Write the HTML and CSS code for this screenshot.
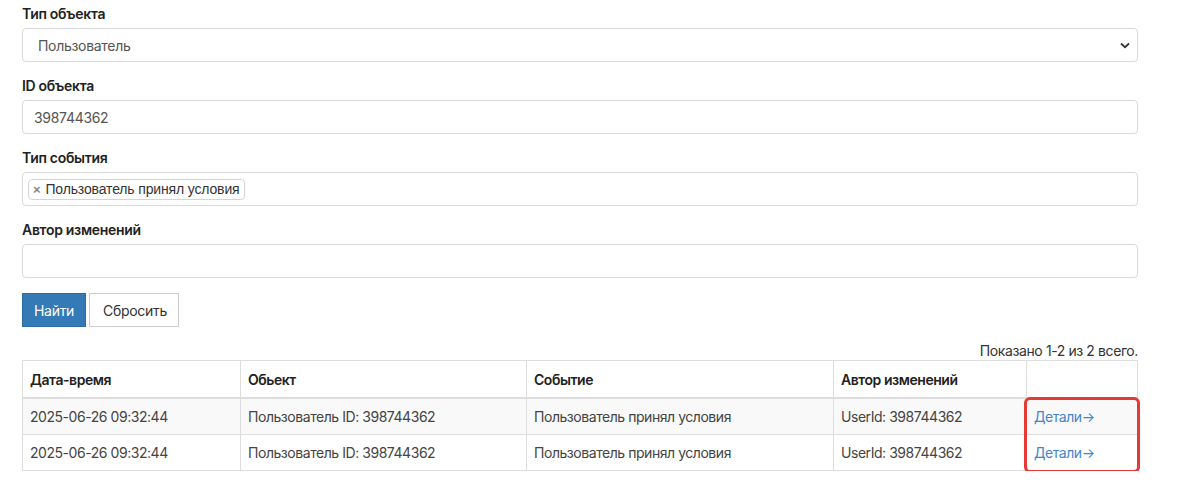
FILE: index.html
```html
<!DOCTYPE html>
<html lang="ru">
<head>
<meta charset="utf-8">
<link rel="stylesheet" href="styles.css">
</head>
<body>
<div class="page">
  <form class="filters">
    <div class="field">
      <label class="label">Тип объекта</label>
      <div class="control select">
        <span class="select-value">Пользователь</span>
        <svg class="chev" width="10" height="7" viewBox="0 0 10 7"><path d="M1 1.5 L5 5.2 L9 1.5" fill="none" stroke="#333" stroke-width="1.8"/></svg>
      </div>
    </div>
    <div class="field">
      <label class="label">ID объекта</label>
      <div class="control input">398744362</div>
    </div>
    <div class="field">
      <label class="label">Тип события</label>
      <div class="control multi">
        <span class="tag"><span class="tag-x">×</span>Пользователь принял условия</span>
      </div>
    </div>
    <div class="field">
      <label class="label">Автор изменений</label>
      <div class="control input"></div>
    </div>
    <div class="buttons">
      <button type="button" class="btn btn-primary">Найти</button>
      <button type="button" class="btn btn-default">Сбросить</button>
    </div>
  </form>

  <div class="summary">Показано 1-2 из 2 всего.</div>
  <div class="table-wrap">
    <table class="grid">
      <colgroup>
        <col class="c1"><col class="c2"><col class="c3"><col class="c4"><col class="c5">
      </colgroup>
      <thead>
        <tr><th>Дата-время</th><th>Обьект</th><th>Событие</th><th>Автор изменений</th><th></th></tr>
      </thead>
      <tbody>
        <tr class="odd"><td>2025-06-26 09:32:44</td><td>Пользователь ID: 398744362</td><td>Пользователь принял условия</td><td>UserId: 398744362</td><td><a class="link">Детали→</a></td></tr>
        <tr><td>2025-06-26 09:32:44</td><td>Пользователь ID: 398744362</td><td>Пользователь принял условия</td><td>UserId: 398744362</td><td><a class="link">Детали→</a></td></tr>
      </tbody>
    </table>
    <div class="highlight"></div>
  </div>
</div>
</body>
</html>
```
FILE: styles.css
```css
html, body {
  margin: 0;
  padding: 0;
  background: #fff;
}
body {
  font-family: Inter, "Noto Sans", sans-serif;
  font-size: 14px;
  color: #333;
}
.page {
  width: 1116px;
  padding: 5px 0 0 22px;
}
.filters {
  display: flex;
  flex-direction: column;
}
.field {
  display: flex;
  flex-direction: column;
  margin-bottom: 15px;
}
.label {
  font-weight: 600;
  font-size: 14px;
  line-height: 18px;
  color: #222;
  margin-bottom: 5px;
  letter-spacing: -0.3px;
}
.control {
  box-sizing: border-box;
  height: 34px;
  border: 1px solid #d9d9d9;
  border-radius: 4px;
  display: flex;
  align-items: center;
  color: #555;
  letter-spacing: -0.3px;
}
.select {
  padding: 0 7px 0 15px;
  justify-content: space-between;
}
.input {
  padding: 0 11px;
}
.multi {
  padding: 0 5px;
}
.tag {
  font-family: "Liberation Sans", Arial, sans-serif;
  font-size: 14px;
  letter-spacing: -0.15px;
  color: #333;
  background: #fff;
  border: 1px solid #d5d5d5;
  border-radius: 4px;
  height: 21px;
  box-sizing: border-box;
  display: inline-flex;
  align-items: center;
  padding: 0 4px 0 4px;
}
.tag-x {
  color: #888;
  font-weight: bold;
  margin-right: 5px;
  font-size: 13px;
}
.buttons {
  display: flex;
  gap: 3px;
  margin-top: 0;
}
.btn {
  font-family: inherit;
  font-size: 14px;
  height: 34px;
  padding: 0 11px;
  border-radius: 0;
  border: 1px solid;
  letter-spacing: -0.3px;
}
.btn-primary {
  background: #337ab7;
  border-color: #2e6da4;
  color: #fff;
}
.btn-default {
  background: #fff;
  border-color: #ccc;
  color: #333;
  padding: 0 11px 0 13px;
}
.summary {
  text-align: right;
  margin-top: 16px;
  line-height: 16px;
  font-size: 14px;
  letter-spacing: -0.4px;
  color: #333;
}
.table-wrap {
  position: relative;
  margin-top: 1px;
}
.grid {
  width: 100%;
  border-collapse: collapse;
  border: 1px solid #ddd;
  letter-spacing: -0.45px;
}
.c1 { width: 218px; }
.c2 { width: 286px; }
.c3 { width: 307px; }
.c4 { width: 193px; }
.grid th, .grid td {
  border: 1px solid #ddd;
  text-align: left;
  padding: 0 7px;
}
.grid th {
  height: 36px;
  font-weight: 600;
  color: #222;
  border-bottom-width: 2px;
}
.grid td {
  height: 35px;
  color: #444;
}
.grid tr.odd td {
  background: #f9f9f9;
}
.link {
  color: #4584cc;
}
.highlight {
  position: absolute;
  left: 1002px;
  top: 37px;
  width: 110px;
  height: 70px;
  border: 3px solid #e53935;
  border-radius: 6px;
}
```
